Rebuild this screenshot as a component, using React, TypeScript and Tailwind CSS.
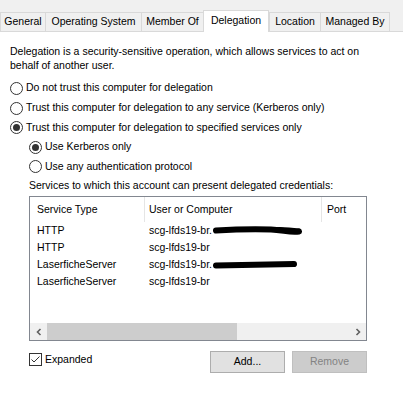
import React from 'react';

const tabs = [
  { label: 'General', width: 'w-[45px]' },
  { label: 'Operating System', width: 'w-[96px]' },
  { label: 'Member Of', width: 'w-[62px]' },
  { label: 'Delegation', width: 'w-[66px]', active: true },
  { label: 'Location', width: 'w-[51px]' },
  { label: 'Managed By', width: 'w-[70px]' },
];

const services = [
  { type: 'HTTP', host: 'scg-lfds19-br.', redact: 'wave' },
  { type: 'HTTP', host: 'scg-lfds19-br' },
  { type: 'LaserficheServer', host: 'scg-lfds19-br.', redact: 'bar' },
  { type: 'LaserficheServer', host: 'scg-lfds19-br' },
];

function Radio({ checked }: { checked?: boolean }) {
  return (
    <span className="flex items-center justify-center w-[13px] h-[13px] rounded-full border border-[#333333] bg-white shrink-0">
      {checked && <span className="w-[7px] h-[7px] rounded-full bg-[#333333]" />}
    </span>
  );
}

function RadioRow({ label, checked, height }: { label: string; checked?: boolean; height: string }) {
  return (
    <div className={`flex items-center gap-[3px] ${height}`}>
      <Radio checked={checked} />
      <span>{label}</span>
    </div>
  );
}

// black marker over the domain part of the host name
function Redaction({ kind }: { kind: string }) {
  if (kind === 'wave') {
    return (
      <svg className="ml-[1px] shrink-0" width="90" height="14" viewBox="0 0 90 14">
        <path d="M3 6.5 C20 5.5 40 5 58 5.5 C70 6 78 9 86 7.5" stroke="#000" strokeWidth="6" fill="none" strokeLinecap="round" />
        <path d="M56 5.5 C66 4.5 76 5 86 6.5" stroke="#000" strokeWidth="4" fill="none" strokeLinecap="round" />
      </svg>
    );
  }
  return (
    <svg className="ml-[1px] shrink-0" width="84" height="14" viewBox="0 0 84 14">
      <path d="M3 7.5 C25 7 50 6.5 81 6" stroke="#000" strokeWidth="6" fill="none" strokeLinecap="round" />
    </svg>
  );
}

export default function App() {
  return (
    <div className="w-[403px] h-[397px] bg-white text-black text-[10.5px] font-['Liberation_Sans',Arial,sans-serif] overflow-hidden">
      <div className="flex items-end h-[32px] bg-[#f0f0f0] border-b border-[#d9d9d9]">
        {tabs.map(tab =>
          tab.active ? (
            <div
              key={tab.label}
              className={`${tab.width} h-[22px] -mb-px bg-white border border-b-0 border-[#d9d9d9] flex items-center justify-center pb-[2px]`}
            >
              {tab.label}
            </div>
          ) : (
            <div
              key={tab.label}
              className={`${tab.width} h-[19px] border-t border-l border-[#d9d9d9] last:border-r flex items-center justify-center`}
            >
              {tab.label}
            </div>
          ),
        )}
      </div>

      <div className="pl-[10px]">
        <p className="mt-[12px] leading-[14px]">
          Delegation is a security-sensitive operation, which allows services to act on
          <br />
          behalf of another user.
        </p>

        <div className="mt-[6px]">
          <RadioRow label="Do not trust this computer for delegation" height="h-[20px]" />
          <RadioRow label="Trust this computer for delegation to any service (Kerberos only)" height="h-[20px]" />
          <RadioRow label="Trust this computer for delegation to specified services only" checked height="h-[19px]" />
        </div>

        <div className="pl-[19px]">
          <RadioRow label="Use Kerberos only" checked height="h-[20px]" />
          <RadioRow label="Use any authentication protocol" height="h-[19px]" />
          <div className="h-[20px] flex items-center">Services to which this account can present delegated credentials:</div>

          <div className="w-[338px] h-[145px] border border-[#828790] flex flex-col">
            <div className="flex h-[25px]">
              <div className="w-[115px] pl-[7px] flex items-center border-r border-[#e5e5e5]">Service Type</div>
              <div className="w-[177px] pl-[4px] flex items-center border-r border-[#e5e5e5]">User or Computer</div>
              <div className="flex-1 pl-[5px] flex items-center">Port</div>
            </div>
            {services.map((s, i) => (
              <div key={i} className="flex h-[17px] items-center">
                <div className="w-[115px] pl-[7px]">{s.type}</div>
                <div className="w-[177px] pl-[4px] flex items-center">
                  <span>{s.host}</span>
                  {s.redact && <Redaction kind={s.redact} />}
                </div>
              </div>
            ))}
            <div className="flex-1" />
            <div className="flex h-[17px] bg-[#f0f0f0]">
              <div className="w-[17px] flex items-center justify-center">
                <svg width="8" height="8" viewBox="0 0 8 8">
                  <path d="M5.5 1 L2.5 4 L5.5 7" stroke="#606060" strokeWidth="1.6" fill="none" />
                </svg>
              </div>
              <div className="w-[190px] bg-[#cdcdcd]" />
              <div className="flex-1" />
              <div className="w-[17px] flex items-center justify-center">
                <svg width="8" height="8" viewBox="0 0 8 8">
                  <path d="M2.5 1 L5.5 4 L2.5 7" stroke="#606060" strokeWidth="1.6" fill="none" />
                </svg>
              </div>
            </div>
          </div>

          <div className="w-[338px] flex items-start mt-[10px]">
            <div className="flex items-center gap-[3px] mt-[1px]">
              <span className="w-[13px] h-[13px] border border-[#333333] bg-white flex items-center justify-center">
                <svg width="11" height="11" viewBox="0 0 11 11">
                  <path d="M1.5 5.5 L4 8 L9.5 2.5" stroke="#333333" strokeWidth="1" fill="none" />
                </svg>
              </span>
              <span>Expanded</span>
            </div>
            <div className="flex-1" />
            <button type="button" className="w-[75px] h-[22px] bg-[#e1e1e1] border border-[#adadad] text-black">
              Add...
            </button>
            <button type="button" className="w-[75px] h-[22px] ml-[7px] bg-[#cccccc] border border-[#bfbfbf] text-[#838383]">
              Remove
            </button>
          </div>
        </div>
      </div>
    </div>
  );
}
